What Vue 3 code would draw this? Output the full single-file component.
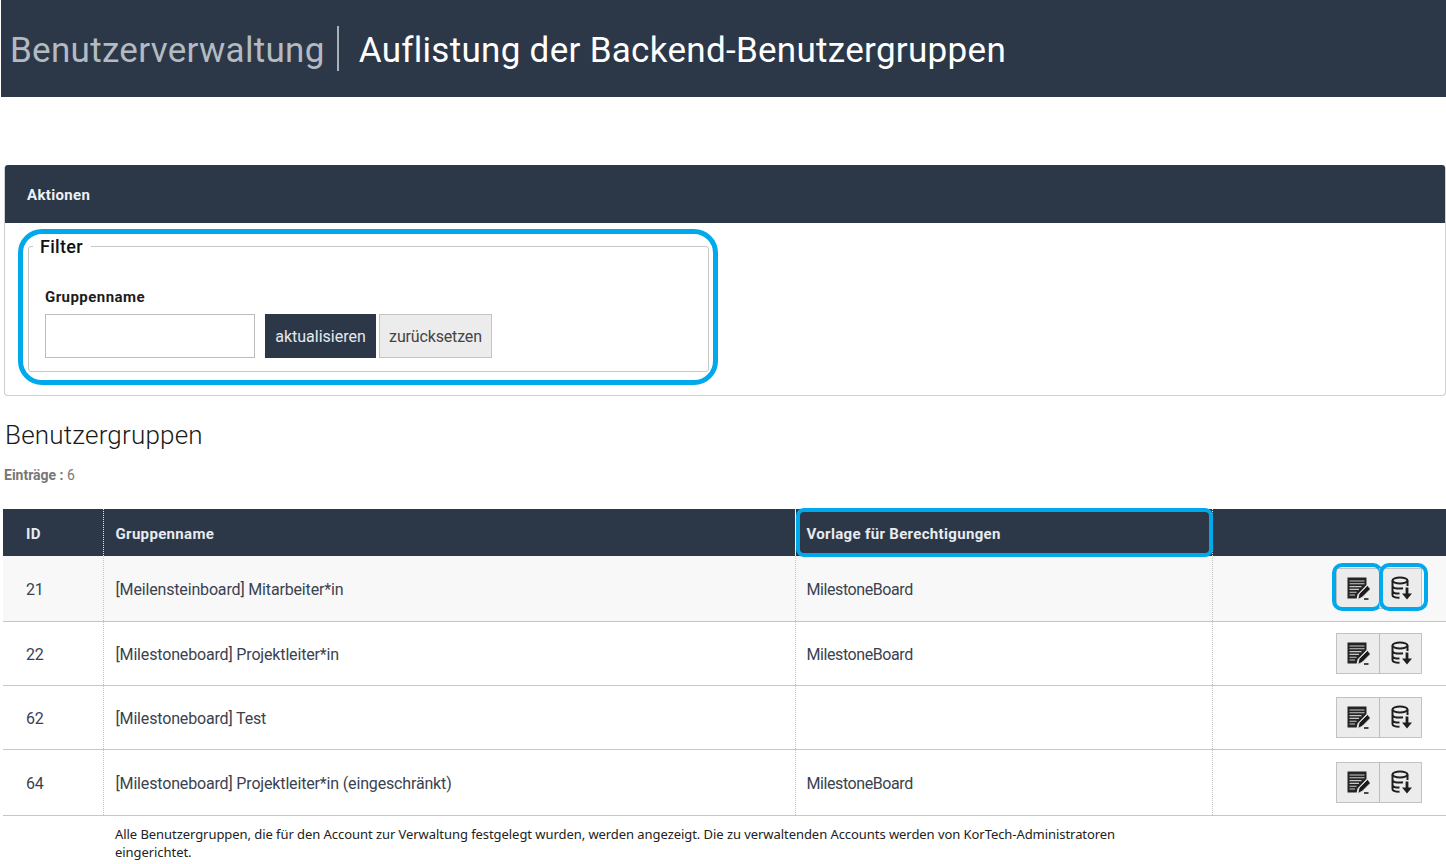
<script setup>
const rows = [
  { id: 21, name: '[Meilensteinboard] Mitarbeiter*in', tpl: 'MilestoneBoard', h: 65, marked: true },
  { id: 22, name: '[Milestoneboard] Projektleiter*in', tpl: 'MilestoneBoard', h: 64 },
  { id: 62, name: '[Milestoneboard] Test', tpl: '', h: 64 },
  { id: 64, name: '[Milestoneboard] Projektleiter*in (eingeschränkt)', tpl: 'MilestoneBoard', h: 66 },
]
</script>

<template>
  <div class="page">
    <header class="top">
      <h1 class="crumb">Benutzerverwaltung</h1>
      <span class="sep"></span>
      <h1 class="title">Auflistung der Backend-Benutzergruppen</h1>
    </header>

    <section class="panel">
      <div class="panel-head">Aktionen</div>
      <div class="panel-body">
        <fieldset class="filter">
          <legend>Filter</legend>
          <label class="lbl">Gruppenname</label>
          <div class="controls">
            <input class="field" type="text" />
            <button class="btn primary">aktualisieren</button>
            <button class="btn plain">zurücksetzen</button>
          </div>
        </fieldset>
        <div class="mark filter-mark"></div>
      </div>
    </section>

    <h2 class="sub">Benutzergruppen</h2>
    <p class="count"><b>Einträge :</b> 6</p>

    <table class="grid">
      <colgroup>
        <col class="c1" /><col class="c2" /><col class="c3" /><col class="c4" />
      </colgroup>
      <thead>
        <tr>
          <th>ID</th>
          <th>Gruppenname</th>
          <th class="tpl-head">Vorlage für Berechtigungen<span class="mark head-mark"></span></th>
          <th></th>
        </tr>
      </thead>
      <tbody>
        <tr v-for="(r, i) in rows" :key="r.id" :class="{ odd: i === 0 }" :style="{ height: r.h + 'px' }">
          <td>{{ r.id }}</td>
          <td>{{ r.name }}</td>
          <td class="tpl">{{ r.tpl }}</td>
          <td class="acts">
            <div class="group">
              <button class="icon-btn left" aria-label="Bearbeiten">
                <svg width="24" height="24" viewBox="0 0 24 24">
                  <path d="M1.500 1.500h19v7.500l-9 9.500-.8 4H1.500z" fill="#242424" />
                  <path d="M3.500 5h15M3.500 7.800h15M3.500 10.600h12M3.500 13.400h9.500M3.500 16.200h7M3.500 19h5.500" stroke="#c9c9c9" stroke-width="1.100" fill="none" />
                  <path d="M12 23.500l1-5.500 8.500-8.500 3 3.500-8 8z" fill="#1c1c1c" stroke="#ececec" stroke-width="0.800" />
                  <path d="M18 23h4.500" stroke="#1f1f1f" stroke-width="1.600" />
                </svg>
                <span v-if="r.marked" class="mark btn-mark"></span>
              </button>
              <button class="icon-btn right" aria-label="Exportieren">
                <svg width="24" height="24" viewBox="0 0 24 24" fill="none" stroke="#1f1f1f" stroke-width="2">
                  <ellipse cx="11" cy="4.500" rx="7.500" ry="3" />
                  <path d="M3.500 4.500v14.500c0 1.700 3 2.800 7 2.800M18.500 4.500v5.500M3.500 9.700c0 1.700 3.300 2.900 7.500 2.900 1 0 2-.1 3-.3M3.500 14.700c0 1.700 3 2.900 7 2.900" />
                  <path d="M18 11.500v7" stroke-width="2.800" />
                  <path d="M13 17.500h10L18 23.500z" fill="#1f1f1f" stroke="none" />
                </svg>
                <span v-if="r.marked" class="mark btn-mark"></span>
              </button>
            </div>
          </td>
        </tr>
      </tbody>
    </table>

    <p class="note">Alle Benutzergruppen, die für den Account zur Verwaltung festgelegt wurden, werden angezeigt. Die zu verwaltenden Accounts werden von KorTech-Administratoren eingerichtet.</p>
  </div>
</template>

<style scoped>
.page {
  font-family: Roboto, "Liberation Sans", sans-serif;
  color: #2b3646;
  height: 864px;
  overflow: hidden;
  background: #fff;
}
.top {
  margin-left: 1px;
  height: 97px;
  background: #2c3848;
  display: flex;
  align-items: center;
  padding: 3px 0 0 9px;
  box-sizing: border-box;
}
.crumb, .title {
  margin: 0;
  font-size: 35px;
  font-weight: 400;
}
.crumb { color: #b4bac1; letter-spacing: 0.3px; }
.title { color: #fff; letter-spacing: 0.3px; }
.sep {
  width: 2px;
  height: 45px;
  margin: -3px 20px 0 12px;
  background: #aab0b8;
}
.panel {
  margin: 68px 0 0 4px;
  height: 231px;
  box-sizing: border-box;
  border: 1px solid #cfcfcf;
  border-top: 0;
  border-radius: 4px;
}
.panel-head {
  height: 58px;
  background: #2c3848;
  color: #eef1f5;
  font-weight: 700;
  font-size: 15px;
  letter-spacing: 0.35px;
  line-height: 60px;
  padding-left: 22px;
  border-radius: 3px 3px 0 0;
}
.panel-body { position: relative; }
.filter {
  position: absolute;
  left: 23px;
  top: 12px;
  width: 681px;
  height: 137px;
  box-sizing: border-box;
  margin: 0;
  padding: 0 0 0 16px;
  border: 1px solid #c8c8c8;
  border-radius: 3px;
}
.filter legend {
  padding: 2px 8px 0 7px;
  margin-left: -12px;
  font-size: 18px;
  font-weight: 500;
  letter-spacing: 0.3px;
  color: #111;
  line-height: 20px;
}
.lbl {
  display: block;
  margin-top: 31px;
  font-size: 15px;
  font-weight: 700;
  letter-spacing: 0.45px;
  color: #1c1c1c;
  line-height: 18px;
}
.controls {
  display: flex;
  margin-top: 8px;
  height: 44px;
}
.field {
  width: 210px;
  box-sizing: border-box;
  border: 1px solid #bdbdbd;
  background: #fff;
  margin-right: 10px;
}
.btn {
  font: inherit;
  font-size: 16px;
  height: 44px;
  box-sizing: border-box;
  padding: 0;
  cursor: pointer;
}
.primary {
  width: 111px;
  background: #2c3848;
  color: #e6e9ee;
  border: 0;
  margin-right: 3px;
}
.plain {
  width: 113px;
  background: #ececec;
  color: #444;
  border: 1px solid #c4c4c4;
  letter-spacing: -0.15px;
}
.mark {
  position: absolute;
  box-sizing: border-box;
  border: 4px solid #00a9ec;
  pointer-events: none;
}
.filter-mark {
  left: 13px;
  top: 6px;
  width: 700px;
  height: 156px;
  border-width: 5px;
  border-radius: 24px;
}
.sub {
  margin: 23px 0 0 5px;
  font-size: 26px;
  font-weight: 300;
  letter-spacing: 0.2px;
  color: #1a1a1a;
  line-height: 32px;
}
.count {
  margin: 15px 0 0 4px;
  font-size: 14px;
  line-height: 18px;
  color: #777;
}
.count b { font-weight: 700; }
.grid {
  margin: 25px 0 0 3px;
  width: 1443px;
  table-layout: fixed;
  border-collapse: collapse;
  font-size: 16px;
}
.c1 { width: 100px; }
.c2 { width: 692px; }
.c3 { width: 417px; }
.c4 { width: 234px; }
th {
  height: 47px;
  background: #2c3848;
  color: #e8ebf0;
  text-align: left;
  font-size: 15px;
  font-weight: 700;
  letter-spacing: 0.33px;
  padding: 2px 0 0 12px;
  box-sizing: border-box;
}
th:first-child { padding-left: 23px; }
th + th { border-left: 1px dotted #e4e6e9; }
.tpl-head { position: relative; padding-left: 11px; }
.head-mark {
  left: 0;
  top: -1px;
  right: -1px;
  bottom: -1px;
  border-radius: 8px;
}
td {
  padding: 2px 0 0 12px;
  border-bottom: 1px solid #c6c6c6;
  color: #3a4250;
  box-sizing: border-box;
  letter-spacing: -0.16px;
  background: #fff;
}
td:first-child { padding-left: 23px; }
td.tpl { padding-left: 11px; letter-spacing: -0.42px; }
td + td { border-left: 1px dotted #c4c4c4; }
tr.odd td { background: #f8f8f8; }
td.acts { padding: 0; }
.group {
  display: flex;
  justify-content: flex-end;
  padding-right: 24px;
}
.icon-btn {
  position: relative;
  width: 43px;
  height: 41px;
  padding: 0;
  box-sizing: border-box;
  background: #ececec;
  border: 1px solid #c2c2c2;
  display: flex;
  align-items: center;
  justify-content: center;
}
.icon-btn.left { border-right: 0; }
.icon-btn.right { border-left: 1px solid #bcbcbc; }
.btn-mark {
  top: -6px;
  bottom: -3px;
  border-radius: 10px;
}
.left .btn-mark { left: -5px; right: -4px; }
.right .btn-mark { left: -1px; right: -7px; }
.note {
  margin: 9px 0 0 115px;
  width: 1010px;
  font-family: "Noto Sans", sans-serif;
  font-size: 13px;
  letter-spacing: -0.06px;
  line-height: 18px;
  color: #222;
}
</style>

<style>
html, body { margin: 0; overflow: hidden; }
</style>
